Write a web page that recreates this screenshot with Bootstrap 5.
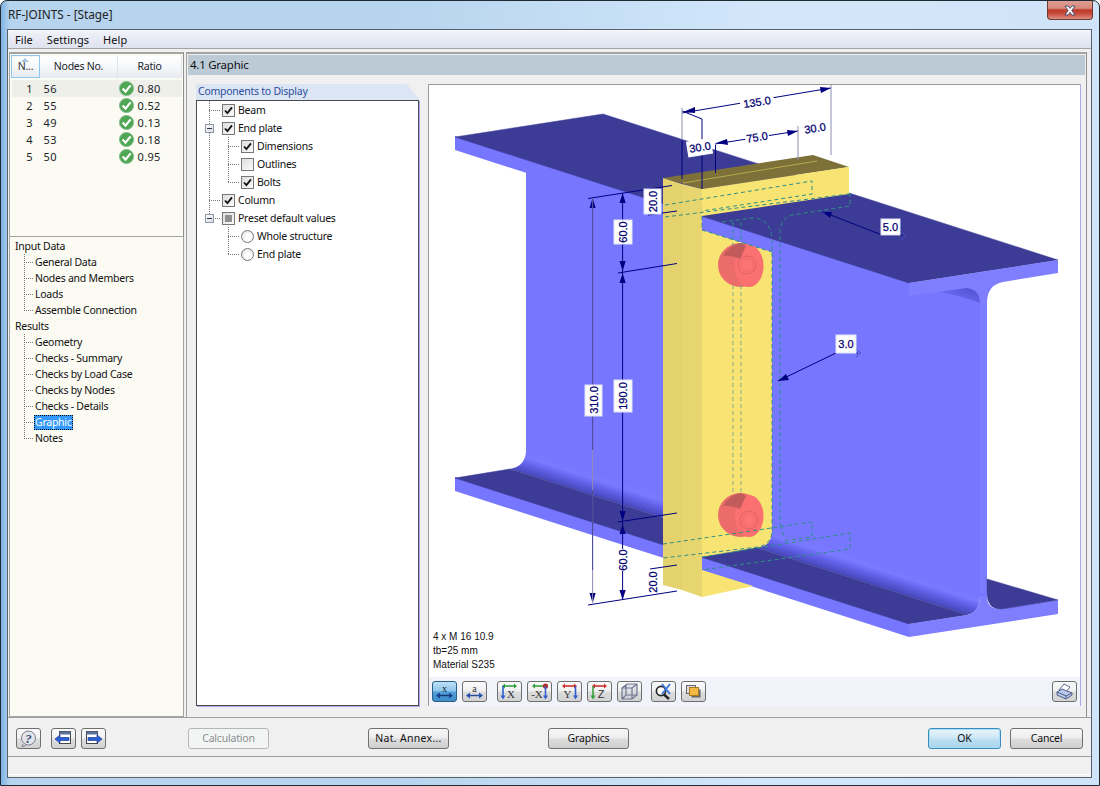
<!DOCTYPE html>
<html lang="en">
<head>
<meta charset="utf-8">
<title>RF-JOINTS - [Stage]</title>
<link href="https://cdn.jsdelivr.net/npm/bootstrap@5.3.0/dist/css/bootstrap.min.css" rel="stylesheet">
<style>
html,body{margin:0;height:786px;overflow:hidden;background:#fff}
body{font-family:"Noto Sans","Liberation Sans",sans-serif;font-size:10.5px;letter-spacing:-.25px;line-height:1;color:#111}
.wnd{width:1100px;height:786px;border:1px solid #1f2b33;border-radius:7px 7px 0 0;background:linear-gradient(90deg,#7fb2e2 0,#b6d4ee 9px,#b6d4ee 35%,#d3e7fa 70%,#cfe4f8 100%)}
.ttl{height:28px;padding-left:7px;font-size:11.8px;letter-spacing:0;color:#222}
.cls{width:46px;height:19px;margin-right:6px;border:1px solid #6d3a34;border-top:0;border-radius:0 0 4px 4px;background:linear-gradient(#dd9d92 0,#d78a7c 40%,#bf3a28 50%,#c64b3a 70%,#dc8f84 100%);color:#fff}
.cli{margin:0 7px 0 6px;height:749px;border:1px solid #56626c;background:#f0f0f0}
.mnu{height:19px;background:linear-gradient(#f6f7fb 0,#eceef6 25%,#dfe3ef 100%);border-bottom:1px solid #a3a3a3;padding-left:7px;gap:14px;font-size:11px;letter-spacing:.05px}
.wrk{height:669px;padding:3px 4px 0 1px;gap:2px;border-bottom:1px solid #a0a0a0}
.lft{width:175px}
.lp1{height:185px;background:#fbfbf3;border:1px solid #a3a3a3;border-top-width:2px;border-right-color:#8f8f8f;padding:1px 3px 0 1px}
.lp2{flex:1;background:#fbfbf3;border:1px solid #a3a3a3;border-top:0;padding:1px 0 0 5px}
.tbl{table-layout:fixed;width:170px;border-collapse:collapse;--bs-table-bg:transparent}
.c-a{width:28px}.c-b{width:78px}.c-c{width:64px}
.tbl th{height:22px;padding:0;font-weight:400;text-align:center;vertical-align:middle;border:0;border-right:1px solid #dfe3ea;background:linear-gradient(#fff 0,#f5f7fa 50%,#e6e9ee 100%);position:relative;font-size:10.5px}
.tbl th.act{border:1px solid #8cc7ee;color:#333}
.tbl td{height:17px;padding:0;border:0;vertical-align:middle;background:transparent;font-size:11px;letter-spacing:.35px}
.tbl tbody tr:nth-child(2) td{background:#efefea}
.tbl .gap-r td{height:2px}
.srt{position:absolute;left:9px;top:2px;width:0;height:0;border:4px solid transparent;border-top:0;border-bottom:4px solid #a6c6e0}
.rt{display:flex;align-items:center;gap:4px;padding-left:1px}
.nv-h{height:16px;display:flex;align-items:center}
.nv-k{height:16px;margin-left:9px;padding-left:10px;display:flex;align-items:center;background:repeating-linear-gradient(to bottom,#777 0 1px,transparent 1px 2px) 0 0/1px 100% no-repeat,repeating-linear-gradient(to right,#777 0 1px,transparent 1px 2px) 0 50%/10px 1px no-repeat}
.nv-k.end{background:repeating-linear-gradient(to bottom,#777 0 1px,transparent 1px 2px) 0 0/1px 50% no-repeat,repeating-linear-gradient(to right,#777 0 1px,transparent 1px 2px) 0 50%/10px 1px no-repeat}
.nv-k>span{padding:0 1px;line-height:15px;height:15px}
.nv-sel{background:#3399ff;color:#fff;outline:1px dotted #111;outline-offset:-1px}
.rgt{width:901px;border:1px solid #a3a3a3;border-top-width:2px;border-right-color:#8f8f8f;border-bottom:0;padding:1px 1px 0}
.hdr{height:20px;background:#bccad6;padding-left:2px;font-size:11.5px;display:flex;align-items:center}
.bd2{padding:9px 0 0 8px;gap:8px}
.lcl{width:224px}
.tabh{height:16px;background:#dce5f3;color:#2b4f9f;padding:0 0 2px 2px;display:flex;align-items:center;clip-path:polygon(0 0,94% 0,100% 100%,0 100%)}
.tre{height:606px;width:223px;background:#fff;border:1px solid #4a4a4a;box-shadow:1px 1px 0 #a9a9ee;padding:0 0 0 1px}
.tr-r{height:18px;display:flex;align-items:center;font-size:10.5px}
.tr-1{padding-left:24px}
.tr-2{padding-left:43px}
.cb{width:13px;height:13px;flex:none;border:1px solid #777;background:linear-gradient(135deg,#ddd,#fbfbfb);margin-right:3px;display:flex;align-items:center;justify-content:center}
.cb-mid::after{content:"";width:7px;height:7px;background:#8f8f8f}
.rdo{width:13px;height:13px;flex:none;border:1px solid #777;border-radius:50%;background:radial-gradient(circle at 60% 60%,#fff 30%,#d8d8d8 100%);margin-right:3px}
.dt-v{background:repeating-linear-gradient(to bottom,#777 0 1px,transparent 1px 2px) 11px 0/1px 100% no-repeat}
.t-1{background:repeating-linear-gradient(to right,#777 0 1px,transparent 1px 2px) 11px 50%/11px 1px no-repeat,repeating-linear-gradient(to bottom,#777 0 1px,transparent 1px 2px) 11px 0/1px 100% no-repeat}
.t-e{background:repeating-linear-gradient(to right,#777 0 1px,transparent 1px 2px) 30px 50%/11px 1px no-repeat,repeating-linear-gradient(to bottom,#777 0 1px,transparent 1px 2px) 30px 0/1px 50% no-repeat,repeating-linear-gradient(to bottom,#777 0 1px,transparent 1px 2px) 11px 0/1px 100% no-repeat}
.t-m{background:repeating-linear-gradient(to right,#777 0 1px,transparent 1px 2px) 30px 50%/11px 1px no-repeat,repeating-linear-gradient(to bottom,#777 0 1px,transparent 1px 2px) 30px 0/1px 100% no-repeat,repeating-linear-gradient(to bottom,#777 0 1px,transparent 1px 2px) 11px 0/1px 100% no-repeat}
.t-x{background:repeating-linear-gradient(to right,#777 0 1px,transparent 1px 2px) 30px 50%/11px 1px no-repeat,repeating-linear-gradient(to bottom,#777 0 1px,transparent 1px 2px) 30px 0/1px 50% no-repeat}
.t-y{background:repeating-linear-gradient(to right,#777 0 1px,transparent 1px 2px) 30px 50%/11px 1px no-repeat,repeating-linear-gradient(to bottom,#777 0 1px,transparent 1px 2px) 30px 0/1px 100% no-repeat}
.t-l{background:repeating-linear-gradient(to right,#777 0 1px,transparent 1px 2px) 11px 50%/11px 1px no-repeat,repeating-linear-gradient(to bottom,#777 0 1px,transparent 1px 2px) 11px 0/1px 50% no-repeat}
.pm{width:9px;height:9px;flex:none;margin-left:7px;margin-right:8px;border:1px solid #9099a8;background:linear-gradient(135deg,#fff,#d6dbe5);display:flex;align-items:center;justify-content:center}
.pm::after{content:"";width:5px;height:1px;background:#334}
.gfx{width:653px;height:622px;background:#fff;border:1px solid #9a9a9a;border-right-color:#a9a9ee;border-bottom-color:#a9a9ee}
.gfx svg.drw{display:block}
.tbr{height:29px;background:#f0f3f9;padding:4px 3px 0 3px;gap:5px}
.ib{width:25px;height:21px;padding:0;flex:none;border:1px solid #6e6e6e;border-radius:3px;background:linear-gradient(#fbfbfb 0,#f1f1f1 45%,#dcdcdc 55%,#d2d2d2 100%);display:flex;align-items:center;justify-content:center;--bs-btn-hover-bg:#eee}
.ib-on{background:linear-gradient(#bfe0f7 0,#90c6ee 45%,#4f9fd8 55%,#3f8cc6 100%);border-color:#2b5f87}
.ml5{margin-left:5px}
.ml4{margin-left:4px}
.ftr{height:38px;padding:2px 8px 0}
.wb{height:21px;padding:0;font-size:10.5px;letter-spacing:-.2px;line-height:1;color:#111;border:1px solid #707070;border-radius:3px;background:linear-gradient(#f7f7f7 0,#ededed 45%,#dcdcdc 55%,#cfcfcf 100%)}
.wb:disabled{color:#8a8f8f;border-color:#b3b7b7;background:#f3f4f4;opacity:1}
.w81{width:81px}
.w73{width:73px}
.wb-d{border-color:#3a8cbf;background:linear-gradient(#e9f5fc 0,#cfe8f6 45%,#bcdff2 55%,#a8d4ee 100%);box-shadow:inset 0 0 0 1px #a9def7}
.stb{height:19px;border-top:1px solid #a0a0a0;box-shadow:inset 0 -1px 0 #fff}
.nfo{font:10px/14px "Liberation Sans",sans-serif;fill:#111;letter-spacing:0}
.lbl{font:11px "Liberation Sans",sans-serif;letter-spacing:0;fill:#000070;stroke:#000070;stroke-width:.25;text-anchor:middle;dominant-baseline:central}
.ib-nav1{margin-left:10px}.ib-nav2{margin-left:5px}
.btn-calc{margin-left:82px}.btn-nat{margin-left:99px;letter-spacing:.3px}.btn-gr{margin-left:99px}.btn-can{margin-left:9px}
.dk{fill:#3c3c96;stroke:#3c3c96;stroke-width:.5}
</style>
</head>
<body>
<div class="wnd d-flex flex-column">
  <div class="ttl d-flex justify-content-between align-items-start">
    <div class="mt-2">RF-JOINTS - [Stage]</div>
    <div class="cls d-flex align-items-center justify-content-center"><svg width="16" height="11" viewBox="0 0 16 11"><path d="M3 1h3l2 2.4L10 1h3L9.8 5.5 13 10h-3L8 7.4 6 10H3l3.2-4.5z" fill="#fff" stroke="#3c4a70" stroke-width=".9"/></svg></div>
  </div>
  <div class="cli d-flex flex-column">
    <div class="mnu d-flex align-items-center"><span>File</span><span>Settings</span><span>Help</span></div>
    <div class="wrk d-flex">
      <div class="lft d-flex flex-column">
        <div class="lp1">
          <table class="table tbl mb-0">
            <colgroup><col class="c-a"><col class="c-b"><col class="c-c"></colgroup>
            <thead><tr><th class="act"><span class="srt"></span>N...</th><th>Nodes No.</th><th>Ratio</th></tr></thead>
            <tbody>
              <tr class="gap-r"><td colspan="3"></td></tr>
              <tr><td class="ps-2 text-center">1</td><td class="ps-1">56</td><td><span class="rt"><svg width="15" height="15" viewBox="0 0 15 15"><circle cx="7.5" cy="7.5" r="7" fill="#4fa653" stroke="#7fb98a"/><path d="M3.6 7.6l2.9 3L11.6 4.4" fill="none" stroke="#fff" stroke-width="2.2"/></svg>0.80</span></td></tr>
              <tr><td class="ps-2 text-center">2</td><td class="ps-1">55</td><td><span class="rt"><svg width="15" height="15" viewBox="0 0 15 15"><circle cx="7.5" cy="7.5" r="7" fill="#4fa653" stroke="#7fb98a"/><path d="M3.6 7.6l2.9 3L11.6 4.4" fill="none" stroke="#fff" stroke-width="2.2"/></svg>0.52</span></td></tr>
              <tr><td class="ps-2 text-center">3</td><td class="ps-1">49</td><td><span class="rt"><svg width="15" height="15" viewBox="0 0 15 15"><circle cx="7.5" cy="7.5" r="7" fill="#4fa653" stroke="#7fb98a"/><path d="M3.6 7.6l2.9 3L11.6 4.4" fill="none" stroke="#fff" stroke-width="2.2"/></svg>0.13</span></td></tr>
              <tr><td class="ps-2 text-center">4</td><td class="ps-1">53</td><td><span class="rt"><svg width="15" height="15" viewBox="0 0 15 15"><circle cx="7.5" cy="7.5" r="7" fill="#4fa653" stroke="#7fb98a"/><path d="M3.6 7.6l2.9 3L11.6 4.4" fill="none" stroke="#fff" stroke-width="2.2"/></svg>0.18</span></td></tr>
              <tr><td class="ps-2 text-center">5</td><td class="ps-1">50</td><td><span class="rt"><svg width="15" height="15" viewBox="0 0 15 15"><circle cx="7.5" cy="7.5" r="7" fill="#4fa653" stroke="#7fb98a"/><path d="M3.6 7.6l2.9 3L11.6 4.4" fill="none" stroke="#fff" stroke-width="2.2"/></svg>0.95</span></td></tr>
            </tbody>
          </table>
        </div>
        <div class="lp2">
          <div class="nv-h">Input Data</div>
          <div class="nv-k"><span>General Data</span></div>
          <div class="nv-k"><span>Nodes and Members</span></div>
          <div class="nv-k"><span>Loads</span></div>
          <div class="nv-k end"><span>Assemble Connection</span></div>
          <div class="nv-h">Results</div>
          <div class="nv-k"><span>Geometry</span></div>
          <div class="nv-k"><span>Checks - Summary</span></div>
          <div class="nv-k"><span>Checks by Load Case</span></div>
          <div class="nv-k"><span>Checks by Nodes</span></div>
          <div class="nv-k"><span>Checks - Details</span></div>
          <div class="nv-k"><span class="nv-sel">Graphic</span></div>
          <div class="nv-k end"><span>Notes</span></div>
        </div>
      </div>
      <div class="rgt">
        <div class="hdr">4.1 Graphic</div>
        <div class="bd2 d-flex">
          <div class="lcl">
            <div class="tabh">Components to Display</div>
            <div class="tre">
              <div class="tr-r tr-1 t-1"><span class="cb"><svg width="9" height="9" viewBox="0 0 9 9"><path d="M1 4.5l2.4 2.6L8 1.4" fill="none" stroke="#111" stroke-width="1.8"/></svg></span>Beam</div>
              <div class="tr-r dt-v"><span class="pm"></span><span class="cb"><svg width="9" height="9" viewBox="0 0 9 9"><path d="M1 4.5l2.4 2.6L8 1.4" fill="none" stroke="#111" stroke-width="1.8"/></svg></span>End plate</div>
              <div class="tr-r tr-2 t-m"><span class="cb"><svg width="9" height="9" viewBox="0 0 9 9"><path d="M1 4.5l2.4 2.6L8 1.4" fill="none" stroke="#111" stroke-width="1.8"/></svg></span>Dimensions</div>
              <div class="tr-r tr-2 t-m"><span class="cb"></span>Outlines</div>
              <div class="tr-r tr-2 t-e"><span class="cb"><svg width="9" height="9" viewBox="0 0 9 9"><path d="M1 4.5l2.4 2.6L8 1.4" fill="none" stroke="#111" stroke-width="1.8"/></svg></span>Bolts</div>
              <div class="tr-r tr-1 t-1"><span class="cb"><svg width="9" height="9" viewBox="0 0 9 9"><path d="M1 4.5l2.4 2.6L8 1.4" fill="none" stroke="#111" stroke-width="1.8"/></svg></span>Column</div>
              <div class="tr-r t-l"><span class="pm"></span><span class="cb cb-mid"></span>Preset default values</div>
              <div class="tr-r tr-2 t-y"><span class="rdo"></span>Whole structure</div>
              <div class="tr-r tr-2 t-x"><span class="rdo"></span>End plate</div>
            </div>
          </div>
          <div class="gfx">
            <svg class="drw" width="651" height="592" viewBox="429 85 651 592">
              <defs>
                <linearGradient id="fb" gradientUnits="userSpaceOnUse" x1="526" y1="450" x2="519" y2="472"><stop offset="0" stop-color="#7676ff"/><stop offset=".3" stop-color="#7a7aff"/><stop offset=".55" stop-color="#6464ee"/><stop offset="1" stop-color="#4646b8"/></linearGradient>
                <linearGradient id="ft" gradientUnits="userSpaceOnUse" x1="960" y1="286" x2="952" y2="306"><stop offset="0" stop-color="#5656d8"/><stop offset="1" stop-color="#7676ff"/></linearGradient>
              </defs>
              <polygon points="455,136 909,282 909,296 455,150" fill="#7676ff"/>
              <polygon points="526,172 909,295 987,284 987,600 526,452" fill="#7676ff"/>
              <polygon class="dk" points="455,137 603,114 1058,260 909,283"/>
              <path d="M909 283L1058 260V273L1003 282Q987 285 987 303H980Q980 291 967 288L909 296Z" fill="#7e7eff"/>
              <path d="M940 292L967 288Q980 290 980 303Q965 297 940 292Z" fill="url(#ft)"/>
              <rect x="980" y="303" width="7" height="290" fill="#7c7cff"/>
              <path d="M526 450Q526 466 510 469L967 615Q980 612 980 596Z" fill="url(#fb)"/>
              <polygon points="455,477 909,623 909,637 455,491" fill="#7676ff"/>
              <polygon class="dk" points="455,478 510,469 967,615 909,624"/>
              <path d="M909 624L967 615Q980 612 980 596H987Q987 609 1000 609L1058 600V614L909 637Z" fill="#7e7eff"/>
              <path class="dk" d="M987 579L1058 600L1002 609Q987 610 987 592Z"/>

              <polygon points="663,178 813,155 849,167 702,189" fill="#7d7038"/>
              <line x1="683" y1="183" x2="817" y2="161" stroke="#bba94f" stroke-width="1"/>
              <polygon points="663,178 682,184 682,590 663,585" fill="#e3d26d"/>
              <polygon points="682,184 702,189 702,597 682,590" fill="#e7d670"/>
              <polygon points="702,189 849,167 849,194 702,216" fill="#f8e473"/>
              <path d="M702 230L772 252V530Q772 545 760 547L702 557Z" fill="#f8e473"/>
              <polygon points="702,570 753,586 702,597" fill="#f8e473"/>

              <g>
                <ellipse cx="740.500" cy="265" rx="22.500" ry="22" fill="#ec6b6b"/>
                <ellipse cx="749" cy="266" rx="14.500" ry="21" fill="#fb7070"/>
                <path d="M723 256Q729 245 741 243L746 246L740 259Q731 255 723 256Z" fill="#c25c5c"/>
                <circle cx="747" cy="265" r="9" fill="#fb7070" stroke="#dd6464"/>
                <circle cx="747" cy="265" r="6" fill="#fc7474" stroke="#ec6a6a" stroke-width=".7"/>
              </g>
              <g>
                <ellipse cx="740.500" cy="515" rx="22.500" ry="22" fill="#ec6b6b"/>
                <ellipse cx="749" cy="516" rx="14.500" ry="21" fill="#fb7070"/>
                <path d="M723 506Q729 495 741 493L746 496L740 509Q731 505 723 506Z" fill="#c25c5c"/>
                <circle cx="749" cy="520" r="9" fill="#fb7070" stroke="#dd6464"/>
                <circle cx="749" cy="520" r="6" fill="#fc7474" stroke="#ec6a6a" stroke-width=".7"/>
              </g>

              <g fill="none" stroke="#2f8f86" stroke-width="1" stroke-dasharray="4 3">
                <path d="M665 205L812 181V194L702 211"/>
                <path d="M665 217L849 194"/>
                <path d="M850 193V206L792 215Q781 218 780 232V525"/>
                <path d="M702 216V230L772 252"/>
                <path d="M722 222L752 218Q770 218 772 238V530Q772 544 758 547L663 558"/>
                <path d="M702 557L850 533V549L702 570"/>
                <path d="M663 544L812 522V537L782 541"/>
                <path d="M733 222V245M741 222V245M780 525L784 536"/>
              </g>
              <g fill="none" stroke="#8fa890" stroke-width="1" stroke-dasharray="4 3">
                <path d="M733 285V495M741 285V495"/>
              </g>

              <g fill="#000080" stroke="none">
                <polygon points="592.6,198 589.5,208 595.7,208"/>
                <polygon points="592.6,603 589.5,593 595.7,593"/>
                <polygon points="622.6,193 619.5,203 625.7,203"/>
                <polygon points="622.6,271 619.5,261 625.7,261"/>
                <polygon points="622.6,273 619.5,283 625.7,283"/>
                <polygon points="622.6,521 619.5,511 625.7,511"/>
                <polygon points="622.6,524 619.5,534 625.7,534"/>
                <polygon points="622.6,600 619.5,590 625.7,590"/>
                <polygon points="683,112 695,107 695,113"/>
                <polygon points="831,88 820,87 821,93"/>
                <polygon points="716,143 727,139 728,145"/>
                <polygon points="798,131 787,130 788,136"/>
                <polygon points="823,212 832,212 830,218"/>
                <polygon points="778,381 786,374 789,380"/>
              </g>
              <g fill="none" stroke="#000080" stroke-width="1">
                <path d="M622.6 193V600"/>
                <path d="M588 198.5L672 185.5M618 273L677 263.5M618 522L677 513M648 215L677 211M650 569L677 565"/>
                <path d="M588 605L677 591"/>
                <path d="M682 113L831 88M682 111L702 119M715 144L798 131M823 212L882 235M836 353L778 381"/>
                <path d="M702 119V189M682 140V179M715.5 145V173"/>
                <path d="M881 235L903 235M856 353L858 353"/>
                <path d="M901 232L905.5 236L901 240M856 349L860.5 353L856 357" stroke="#4a4ac0"/>
              </g>
              <g fill="none" stroke="#8e8eb4" stroke-width="1">
                <path d="M592.6 198V603"/>
                <path d="M682 108V140M798 126V160M831 85V155"/>
              </g>
              <path d="M592.6 198V450M592.6 490V570" stroke="#48489a" stroke-width="1"/>

              <rect x="585" y="385" width="17" height="31" fill="#fff" stroke="#dfe2f5"/>
              <text class="lbl" transform="translate(593.5 400) rotate(-90)">310.0</text>
              <rect x="614" y="220" width="18" height="24" fill="#fff" stroke="#dfe2f5"/>
              <text class="lbl" transform="translate(623 232) rotate(-90)">60.0</text>
              <rect x="614" y="380" width="18" height="32" fill="#fff" stroke="#dfe2f5"/>
              <text class="lbl" transform="translate(623 396) rotate(-90)">190.0</text>
              <rect x="644" y="189" width="17" height="25" fill="#fff" stroke="#dfe2f5"/>
              <text class="lbl" transform="translate(653 201.5) rotate(-90)">20.0</text>
              <rect x="615" y="549" width="16" height="22" fill="#fff"/>
              <text class="lbl" transform="translate(623 560) rotate(-90)">60.0</text>
              <text class="lbl" transform="translate(653 582) rotate(-90)">20.0</text>

              <rect x="-17" y="-7" width="34" height="14" transform="translate(757 102) rotate(-9)" fill="#fff"/>
              <text class="lbl" transform="translate(757 102) rotate(-9)">135.0</text>
              <rect x="-13" y="-8" width="25" height="16" transform="translate(700 147.5) rotate(-9)" fill="#fff"/>
              <text class="lbl" transform="translate(700 147) rotate(-9)">30.0</text>
              <rect x="-12" y="-6" width="24" height="12" transform="translate(757 137) rotate(-9)" fill="#fff"/>
              <text class="lbl" transform="translate(757 137) rotate(-9)">75.0</text>
              <rect x="-13" y="-6" width="26" height="12" transform="translate(815 128) rotate(-9)" fill="#fff"/>
              <text class="lbl" transform="translate(815 128) rotate(-9)">30.0</text>
              <rect x="881" y="219" width="19" height="16" fill="#fff" stroke="#dfe2f5"/>
              <text class="lbl" x="890.5" y="227">5.0</text>
              <rect x="836" y="335" width="20" height="18" fill="#fff" stroke="#dfe2f5"/>
              <text class="lbl" x="846" y="344">3.0</text>

              <text class="nfo" x="433" y="640">4 x M 16 10.9</text>
              <text class="nfo" x="433" y="654">tb=25 mm</text>
              <text class="nfo" x="433" y="668">Material S235</text>
            </svg>
            <div class="tbr d-flex">
              <button class="btn ib ib-on" type="button" aria-label="Dimensions x"><svg width="19" height="17" viewBox="0 0 19 17"><text x="9.5" y="9" font-family="Liberation Serif" font-size="10" text-anchor="middle" fill="#123">x</text><path d="M2 12.5h15" stroke="#123a70" stroke-width="1.5"/><path d="M1 12.5l4-3v6zM18 12.5l-4-3v6z" fill="#1a3f90"/></svg></button>
              <button class="btn ib" type="button" aria-label="Dimensions a"><svg width="19" height="17" viewBox="0 0 19 17"><text x="9.5" y="9" font-family="Liberation Serif" font-size="10" text-anchor="middle" fill="#333">a</text><path d="M2 12.5h15" stroke="#2a4f9f" stroke-width="1.5"/><path d="M1 12.5l4-3v6zM18 12.5l-4-3v6z" fill="#2a55b0"/></svg></button>
              <button class="btn ib ml5" type="button" aria-label="View X"><svg width="19" height="17" viewBox="0 0 19 17"><path d="M3 3h13" stroke="#3aa040" stroke-width="1.6"/><path d="M2 3l3-2.5v5zM17 3l-3-2.5v5z" fill="#2f9f3a"/><path d="M3 3v11" stroke="#2f5fd0" stroke-width="1.6"/><path d="M3 16.5l-2.5-4h5z" fill="#2f5fd0"/><text x="11" y="15" font-family="Liberation Serif" font-size="11" text-anchor="middle" fill="#333">X</text></svg></button>
              <button class="btn ib" type="button" aria-label="View -X"><svg width="19" height="17" viewBox="0 0 19 17"><path d="M3 3h13" stroke="#3aa040" stroke-width="1.6"/><path d="M2 3l3-2.5v5z" fill="#2f9f3a"/><circle cx="15.5" cy="3" r="2.6" fill="#b52a2a"/><path d="M15.5 3v11" stroke="#2f5fd0" stroke-width="1.6"/><path d="M15.5 16.5l-2.5-4h5z" fill="#2f5fd0"/><text x="7" y="15" font-family="Liberation Serif" font-size="11" text-anchor="middle" fill="#333">-X</text></svg></button>
              <button class="btn ib" type="button" aria-label="View Y"><svg width="19" height="17" viewBox="0 0 19 17"><path d="M3 3h13" stroke="#d03030" stroke-width="1.6"/><path d="M2 3l3-2.5v5zM17 3l-3-2.5v5z" fill="#d03030"/><path d="M15.5 3v11" stroke="#2f5fd0" stroke-width="1.6"/><path d="M15.5 16.5l-2.5-4h5z" fill="#2f5fd0"/><text x="7.5" y="15" font-family="Liberation Serif" font-size="11" text-anchor="middle" fill="#333">Y</text></svg></button>
              <button class="btn ib" type="button" aria-label="View Z"><svg width="19" height="17" viewBox="0 0 19 17"><path d="M3 3h13" stroke="#d03030" stroke-width="1.6"/><path d="M2 3l3-2.5v5zM17 3l-3-2.5v5z" fill="#d03030"/><path d="M3 3v11" stroke="#3aa040" stroke-width="1.6"/><path d="M3 16.5l-2.5-4h5z" fill="#2f9f3a"/><text x="11" y="15" font-family="Liberation Sans" font-size="11" text-anchor="middle" fill="#333">Z</text></svg></button>
              <button class="btn ib" type="button" aria-label="Isometric"><svg width="19" height="17" viewBox="0 0 19 17"><path d="M2 5L7 1H17V12L12 16H2ZM2 5H12V16M12 5L17 1M6 12V2M2 16L6 12H17" fill="#cfd3dd" fill-opacity=".55" stroke="#6f7790" stroke-width="1.2"/></svg></button>
              <button class="btn ib ml4" type="button" aria-label="Zoom"><svg width="19" height="17" viewBox="0 0 19 17"><circle cx="7" cy="8" r="4.6" fill="#fff" stroke="#222" stroke-width="1.7"/><path d="M10 11.5l5 4.5" stroke="#222" stroke-width="2.4"/><path d="M8 1l8 10M16 1L8 11" stroke="#3e78d8" stroke-width="2"/></svg></button>
              <button class="btn ib" type="button" aria-label="Layers"><svg width="19" height="17" viewBox="0 0 19 17"><rect x="2.500" y="2.500" width="9" height="8" fill="#ddd" stroke="#666"/><rect x="7.500" y="6.500" width="9" height="8" fill="#666"/><rect x="5.500" y="4.500" width="9" height="8" fill="#f3b942" stroke="#a77c23"/></svg></button>
              <button class="btn ib ms-auto" type="button" aria-label="Print"><svg width="19" height="17" viewBox="0 0 19 17"><path d="M4 7L9 1L15 4L11 9Z" fill="#fff" stroke="#5c6a90"/><path d="M2 9L7 6L17 10V12L11 16L2 12Z" fill="#b9c7ec" stroke="#4f5f8a"/><path d="M2 9L11 13V16M11 13L17 10" fill="none" stroke="#4f5f8a"/></svg></button>
            </div>
          </div>
        </div>
      </div>
    </div>
    <div class="ftr d-flex align-items-center">
      <button class="btn ib" type="button" aria-label="Help"><svg width="19" height="17" viewBox="0 0 19 17"><circle cx="9.500" cy="8" r="7" fill="#e2e4ea" stroke="#7a7f90"/><path d="M4 14l-1 3 4-2" fill="#e2e4ea" stroke="#7a7f90"/><text x="9.500" y="12.500" font-family="Liberation Serif" font-style="italic" font-weight="700" font-size="13" text-anchor="middle" fill="#3d4a78">?</text></svg></button>
      <button class="btn ib ib-nav1" type="button" aria-label="Previous"><svg width="19" height="17" viewBox="0 0 19 17"><rect x="5.500" y="1.500" width="11" height="12" fill="#fff" stroke="#444"/><rect x="5.500" y="1.500" width="11" height="3" fill="#5a6f99"/><path d="M1 9l5-4v2.500h9v3H6V13z" fill="#2b5fd8" stroke="#173a90" stroke-width=".7"/></svg></button>
      <button class="btn ib ib-nav2" type="button" aria-label="Next"><svg width="19" height="17" viewBox="0 0 19 17"><rect x="2.500" y="1.500" width="11" height="12" fill="#fff" stroke="#444"/><rect x="2.500" y="1.500" width="11" height="3" fill="#5a6f99"/><path d="M18 9l-5-4v2.500H4v3h9V13z" fill="#2b5fd8" stroke="#173a90" stroke-width=".7"/></svg></button>
      <button class="btn wb w81 btn-calc" type="button" disabled>Calculation</button>
      <button class="btn wb w81 btn-nat" type="button">Nat. Annex...</button>
      <button class="btn wb w81 btn-gr" type="button">Graphics</button>
      <button class="btn wb w73 wb-d ms-auto" type="button">OK</button>
      <button class="btn wb w73 btn-can" type="button">Cancel</button>
    </div>
    <div class="stb"></div>
  </div>
</div>
<script src="https://cdn.jsdelivr.net/npm/bootstrap@5.3.0/dist/js/bootstrap.bundle.min.js"></script>
</body>
</html>
